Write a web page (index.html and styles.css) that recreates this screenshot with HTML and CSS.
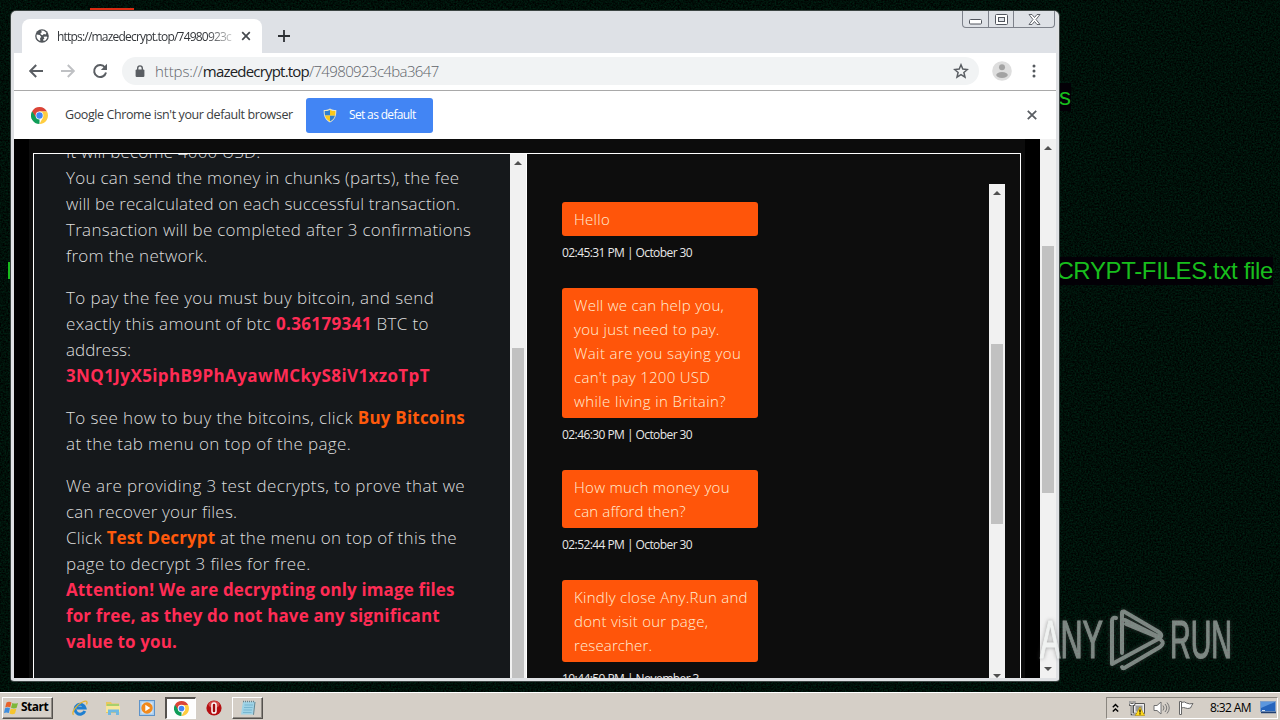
FILE: index.html
```html
<!DOCTYPE html>
<html lang="en">
<head>
    <meta charset="UTF-8">
    <title>mazedecrypt.top</title>
    <link rel="stylesheet" href="styles.css">
</head>
<body>
    <div class="desktop">
        <svg class="noise" width="1280" height="693">
            <filter id="grain" x="0" y="0" width="100%" height="100%" color-interpolation-filters="sRGB">
                <feTurbulence type="fractalNoise" baseFrequency="0.6" numOctaves="2" seed="4"/>
                <feColorMatrix values="0 0 0 0 0  0 0.22 0 0 -0.047  0 0.13 0 0 -0.03  0 0 0 0 1"/>
            </filter>
            <rect width="1280" height="693" filter="url(#grain)"/>
        </svg>
        <div class="desk-icon"></div>
        <div class="wall-text wall-s">s</div>
        <div class="wall-text wall-left"></div>
        <div class="wall-text wall-file">CRYPT-FILES.txt file</div>

        <div class="window">
            <div class="tab-strip">
                <div class="tab">
                    <svg class="globe" width="14" height="14" viewBox="0 0 14 14"><circle cx="7" cy="7" r="6.8" fill="#50555a"/><path d="M1.7 5.4l3 .7 1.6 1.8-1.2 1.2.2 2.8C2.500 11 1 8 1.700 5.400zM6 1.500l2.800.200 2.600 2-.6 1.700-2-.4-1.300 1.200-1.700-.6-.3-1.600 1.500-.7zM8.500 7.700l3.200-.3.7 1-1.700 2.900-2.100.8-.5-1.500 1.300-1z" fill="#fff"/></svg>
                    <span class="tab-title">https://mazedecrypt.top/74980923c</span>
                    <svg class="tab-close" width="10" height="10" viewBox="0 0 10 10"><path d="M1.200 1.200l7.600 7.600M8.800 1.200l-7.600 7.600" stroke="#45494e" stroke-width="1.700"/></svg>
                </div>
                <svg class="new-tab" width="12" height="12" viewBox="0 0 12 12"><path d="M6 0v12M0 6h12" stroke="#2c2f33" stroke-width="1.800"/></svg>
                <div class="win-buttons">
                    <span class="wb wb-min"><svg width="13" height="6"><rect x=".5" y=".5" width="12" height="4.500" rx="1" fill="#fff" stroke="#52565e"/></svg></span>
                    <span class="wb wb-max"><svg width="13" height="11"><rect x=".5" y=".5" width="12" height="10" rx="1" fill="#fff" stroke="#52565e"/><rect x="3.500" y="3.500" width="6" height="4" fill="#dee1e6" stroke="#52565e"/></svg></span>
                    <span class="wb wb-close"><svg width="13" height="11" viewBox="0 0 13 11"><path d="M1 .5h3l2.500 3 2.500-3h3l-4 5 4 5H9l-2.500-3-2.500 3H1l4-5z" fill="#fff" stroke="#52565e" stroke-width=".9"/></svg></span>
                </div>
            </div>

            <div class="toolbar">
                <svg class="nav" width="16" height="16" viewBox="0 0 16 16"><path d="M15 8H2.500M8.200 2L2.200 8l6 6" fill="none" stroke="#5a5e63" stroke-width="2"/></svg>
                <svg class="nav" width="16" height="16" viewBox="0 0 16 16"><path d="M1 8h12.500M7.800 2l6 6-6 6" fill="none" stroke="#bfc1c4" stroke-width="2"/></svg>
                <svg class="nav" width="16" height="16" viewBox="0 0 16 16"><path d="M13 4.500A6 6 0 1 0 14 9.500" fill="none" stroke="#5a5e63" stroke-width="2"/><path d="M15 .8v6.200H8.800z" fill="#5a5e63"/></svg>
                <div class="omnibox">
                    <svg width="10" height="13" viewBox="0 0 10 13"><path d="M2.700 5V3.200a2.300 2.300 0 0 1 4.600 0V5" fill="none" stroke="#5a5e63" stroke-width="1.400"/><rect x=".6" y="4.600" width="8.800" height="7.400" rx="1" fill="#5a5e63"/></svg>
                    <span class="url"><i>https://</i><b>mazedecrypt.top</b>/74980923c4ba3647</span>
                    <svg class="star" width="16" height="16" viewBox="0 0 16 16"><path d="M8 1.800l1.800 4.300 4.600.4-3.500 3 1.100 4.600L8 11.700l-4 2.400 1.100-4.600-3.500-3 4.600-.4z" fill="none" stroke="#5a5e63" stroke-width="1.500"/></svg>
                </div>
                <svg class="avatar" width="20" height="20" viewBox="0 0 20 20"><circle cx="10" cy="10" r="9.800" fill="#dedede"/><circle cx="10" cy="6.300" r="3" fill="#a3a3a3"/><ellipse cx="10" cy="14" rx="5.800" ry="2.900" fill="#a3a3a3"/></svg>
                <svg class="menu" width="4" height="14" viewBox="0 0 4 14"><g fill="#55595e"><circle cx="2" cy="2" r="1.500"/><circle cx="2" cy="7" r="1.500"/><circle cx="2" cy="12" r="1.500"/></g></svg>
            </div>

            <div class="infobar">
                <svg width="17" height="17" viewBox="0 0 48 48"><path d="M24 24v24A24 24 0 0 1 3.200 12z" fill="#0f9d58"/><path d="M24 13h21.300A24 24 0 0 0 3.200 12L14.500 29.500z" fill="#db4437"/><path d="M33.500 29.500L24 48A24 24 0 0 0 45.300 13H24z" fill="#ffcd40"/><circle cx="24" cy="24" r="11" fill="#fff"/><circle cx="24" cy="24" r="9" fill="#4285f4"/></svg>
                <span class="info-text">Google Chrome isn't your default browser</span>
                <button class="default-btn">
                    <svg width="14" height="15" viewBox="0 0 14 15"><path d="M7 .5c2 1.300 4 1.500 6.300 1.500C13.500 8 12 12 7 14.500 2 12 .5 8 .7 2 3 2 5 1.800 7 .5z" fill="#e9e4c5"/><path d="M7 1.900V7.500H2C1.700 6 1.700 4.500 1.700 3 3.800 3 5.300 2.800 7 1.900zM7 7.500h5C11.200 10.300 9.800 12 7 13.400z" fill="#2f7fd0"/><path d="M7 1.900C8.700 2.800 10.200 3 12.300 3c0 1.500 0 3-.3 4.500H7zM2 7.500h5v5.900C4.200 12 2.800 10.300 2 7.500z" fill="#fbc91b"/></svg>
                    <span>Set as default</span>
                </button>
                <svg class="info-close" width="10" height="10" viewBox="0 0 10 10"><path d="M.8.8l8.400 8.400M9.200.8L.8 9.200" stroke="#5a5e63" stroke-width="1.800"/></svg>
            </div>

            <div class="page">
                <div class="content">
                    <div class="box">
                        <div class="instructions">
                            <p>
                                <span class="sp-s">It will become 4000 USD.</span><br>
                                <span class="sp-m">You can send the money in chunks (parts), the fee</span><br>
                                <span class="sp-xs">will be recalculated on each successful transaction.</span><br>
                                <span class="sp-m">Transaction will be completed after 3 confirmations</span><br>
                                <span class="sp-m">from the network.</span>
                            </p>
                            <p>
                                <span class="sp-xl">To pay the fee you must buy bitcoin, and send</span><br>
                                <span class="sp-l">exactly this amount of btc <b class="red">0.36179341</b> BTC to</span><br>
                                <span>address:</span><br>
                                <b class="red sp-xl">3NQ1JyX5iphB9PhAyawMCkyS8iV1xzoTpT</b>
                            </p>
                            <p>
                                <span class="sp-xl">To see how to buy the bitcoins, click <b class="orange sp-s">Buy Bitcoins</b></span><br>
                                <span class="sp-xl">at the tab menu on top of the page.</span>
                            </p>
                            <p>
                                <span class="sp-xl">We are providing 3 test decrypts, to prove that we</span><br>
                                <span class="sp-s">can recover your files.</span><br>
                                <span class="sp-m">Click <b class="orange sp-xs">Test Decrypt</b> at the menu on top of this the</span><br>
                                <span class="sp-l">page to decrypt 3 files for free.</span><br>
                                <b class="red sp-xs">Attention! We are decrypting only image files</b><br>
                                <b class="red sp-xs">for free, as they do not have any significant</b><br>
                                <b class="red sp-xs">value to you.</b>
                            </p>
                        </div>
                        <div class="scrollbar side-scroll"><i class="up"></i><div class="thumb"></div></div>
                        <div class="chat">
                            <div class="messages">
                                <div class="msg">Hello</div>
                                <div class="time">02:45:31 PM | October 30</div>
                                <div class="msg">Well we can help you,<br>you just need to pay.<br><span class="sp-xl">Wait are you saying you</span><br>can't pay 1200 USD<br><span class="sp-xl">while living in Britain?</span></div>
                                <div class="time">02:46:30 PM | October 30</div>
                                <div class="msg">How much money you<br><span class="sp-xs">can afford then?</span></div>
                                <div class="time">02:52:44 PM | October 30</div>
                                <div class="msg">Kindly close Any.Run and<br>dont visit our page,<br><span class="sp-xs">researcher.</span></div>
                                <div class="time">10:44:50 PM | November 3</div>
                            </div>
                            <div class="scrollbar chat-scroll"><i class="up"></i><div class="thumb"></div><i class="down"></i></div>
                        </div>
                    </div>
                </div>
                <div class="scrollbar page-scroll"><i class="up"></i><div class="thumb"></div><i class="down"></i></div>
            </div>
        </div>

        <svg class="watermark" width="200" height="66" viewBox="0 0 200 66">
            <text x="5" y="51" textLength="63" lengthAdjust="spacingAndGlyphs">ANY</text>
            <text x="135" y="51" textLength="62" lengthAdjust="spacingAndGlyphs">RUN</text>
            <g fill="none" stroke-width="4" stroke-linecap="round" stroke-linejoin="round">
                <path d="M87 46V6q0-2 2-1.500l34 20q4 2.500 3 5l-2 .5L90 13"/>
                <path d="M81 11q-4-1-4 3v43l48-26L91 17"/>
                <path d="M87 60q1 2.500 4 0l34-20q5-4 1-7"/>
            </g>
        </svg>
    </div>

    <div class="taskbar">
        <div class="start">
            <svg width="15" height="14" viewBox="0 0 15 14"><path d="M2.500 1.500Q5 .2 7.500 1.500L6.200 6.400Q3.800 5.200 1.200 6.400z" fill="#e8622a"/><path d="M8.300 1.900Q11 3.200 14 1.900L12.700 6.800Q10 8 7 6.800z" fill="#7db73a"/><path d="M1 7.200Q3.500 6 6 7.200L4.800 12Q2.300 10.800 0 12z" fill="#3f8ede"/><path d="M6.800 7.600Q9.500 9 12.400 7.600L11 12.500Q8.500 13.800 5.500 12.500z" fill="#f6c52c"/></svg>
            <span>Start</span>
        </div>
        <div class="task">
            <svg width="16" height="16" viewBox="0 0 16 16"><path d="M12.800 11A5 5 0 1 1 13 8H5" fill="none" stroke="#1f7fd0" stroke-width="3"/><path d="M1.500 14.800C-1 12 5 4.500 10.500 2 14 .3 16 1 14.500 4.500" fill="none" stroke="#e4b32f" stroke-width="1.300"/></svg>
        </div>
        <div class="task">
            <svg width="16" height="16" viewBox="0 0 16 16"><path d="M1 2h5l1 1.500h7V13H1z" fill="#e8c95d"/><path d="M2 4h12v3H2z" fill="#a8cf6c"/><path d="M1 6h14v6H1z" fill="#f8e69a"/><path d="M3 15V9.500h11V15h-3v-2.500H6V15z" fill="#6fb9e2"/></svg>
        </div>
        <div class="task">
            <svg width="16" height="16" viewBox="0 0 16 16"><rect x=".5" y=".5" width="15" height="15" fill="#a9cdee" stroke="#5d93c9"/><rect x="2.500" y="2.500" width="11" height="11" fill="#d7e9f8"/><circle cx="8" cy="8" r="5.700" fill="#f28a1c"/><path d="M6.300 4.800l5 3.200-5 3.200z" fill="#fff"/></svg>
        </div>
        <div class="task pressed">
            <svg width="15" height="15" viewBox="0 0 48 48"><path d="M24 24v24A24 24 0 0 1 3.200 12z" fill="#0f9d58"/><path d="M24 13h21.300A24 24 0 0 0 3.200 12L14.500 29.500z" fill="#db4437"/><path d="M33.500 29.500L24 48A24 24 0 0 0 45.300 13H24z" fill="#ffcd40"/><circle cx="24" cy="24" r="12" fill="#fff"/><circle cx="24" cy="24" r="9" fill="#4285f4"/></svg>
        </div>
        <div class="task">
            <svg width="16" height="16" viewBox="0 0 16 16"><circle cx="8" cy="8" r="7.600" fill="#b50f12"/><ellipse cx="8" cy="4.500" rx="5.500" ry="3.500" fill="#d44a48"/><rect x="6" y="3" width="4" height="10" rx="1.800" fill="#a10c0e" stroke="#fff" stroke-width="1.500"/></svg>
        </div>
        <div class="task raised">
            <svg width="16" height="16" viewBox="0 0 16 16"><path d="M3 1.500h12l-2 13H1z" fill="#9fd3e6"/><path d="M4.500 5h8.500M4 7.500h8.500M3.500 10H12M3 12.500h8.500" stroke="#69abc6" stroke-width=".7"/><path d="M3 1.500h12" stroke="#6c8089" stroke-width="1.500" stroke-dasharray="1 1"/><path d="M15 2l-1.500 12.800" stroke="#5f8796" stroke-width="1"/></svg>
        </div>
        <div class="tray">
            <svg width="7" height="10" viewBox="0 0 7 10"><path d="M.8 4.200l2.700-2.700 2.700 2.700M.8 8.600l2.700-2.700 2.700 2.700" fill="none" stroke="#000" stroke-width="1.400"/></svg>
            <svg class="net" width="16" height="16" viewBox="0 0 16 16"><path d="M4.500 3.500h11v10h-11z" fill="#eee" stroke="#555"/><path d="M6.500 5.500h7v6h-7z" fill="#9a9a9a"/><path d="M1 1v3.500h4V1M3 4.500v9.500h4" fill="none" stroke="#444" stroke-width="2.500"/><path d="M1 1v3.500h4V1M3 4.500v9.500h4" fill="none" stroke="#fff"/><path d="M11 7l4.700 8.500H6.300z" fill="#ffd91c" stroke="#b08a00" stroke-width=".6"/><path d="M11 9.500v3M11 13.300v1.200" stroke="#000" stroke-width="1.200"/></svg>
            <svg class="vol" width="17" height="16" viewBox="0 0 17 16"><path d="M1 5.500h3L8 2v12l-4-3.500H1z" fill="#fff" stroke="#707070"/><path d="M10 5.500q2 2.500 0 5M12 4q3.500 4 0 8M14 2.500q4.500 5.500 0 11" fill="none" stroke="#777" stroke-width="1"/></svg>
            <svg class="flag" width="16" height="16" viewBox="0 0 16 16"><path d="M3.500 2.500q3-1.500 5 .5 3 1.500 6.500.5-1.500 2-2.500 4.500-3 1-5 0-2-1-4 0z" fill="#fff" stroke="#666"/><path d="M1.500 1.500h2v13h-2z" fill="#fff" stroke="#666"/></svg>
            <span class="clock">8:32 AM</span>
            <svg width="16" height="13" viewBox="0 0 16 13"><rect x=".5" y=".5" width="15" height="10" fill="#2665bd" stroke="#7f9fc9"/><path d="M1 1h14L1 7z" fill="#5c97de"/><path d="M1 11.500h15" stroke="#1f3f70" stroke-width="1.500"/><path d="M2 9.500h3" stroke="#cfe2f7"/></svg>
        </div>
    </div>
</body>
</html>
```
FILE: styles.css
```css
* {
    box-sizing: border-box;
}

body {
    margin: 0;
    width: 1280px;
    height: 720px;
    overflow: hidden;
    display: flex;
    flex-direction: column;
    background: #00120b;
    font-family: "Open Sans", "Noto Sans", sans-serif;
}

.desktop {
    position: relative;
    height: 692px;
    overflow: hidden;
}

.noise {
    display: block;
}

/* wallpaper */
.desk-icon {
    position: absolute;
    left: 90px;
    top: 8px;
    width: 44px;
    height: 6px;
    background: #d92b12;
}

.wall-text {
    position: absolute;
    background: #030006;
    color: #18bd1d;
    font: 24px/28px "Liberation Sans", Arial, sans-serif;
    white-space: nowrap;
}

.wall-s {
    left: 1059px;
    top: 83px;
}

.wall-file {
    right: 7px;
    top: 257px;
    letter-spacing: -0.35px;
}

.wall-left {
    left: 8px;
    top: 262px;
    width: 4px;
    height: 17px;
    background: #18bd1d;
}

/* browser window */
.window {
    position: absolute;
    left: 11px;
    top: 11px;
    width: 1048px;
    height: 670px;
    display: flex;
    flex-direction: column;
    border: solid #dfe1e4;
    border-width: 0 3px 3px;
    border-radius: 5px 5px 3px 3px;
    background: #dee1e6;
    overflow: hidden;
    box-shadow: 0 0 0 1px #3c4543;
}

.tab-strip {
    display: flex;
    height: 42px;
    flex: none;
}

.tab {
    display: flex;
    align-items: center;
    width: 240px;
    height: 34px;
    margin: 8px 0 0 8px;
    padding-left: 13px;
    border-radius: 8px 8px 0 0;
    background: #fff;
}

.tab-title {
    width: 177px;
    margin-left: 8px;
    overflow: hidden;
    font-size: 12px;
    letter-spacing: -0.8px;
    white-space: nowrap;
    color: #33363a;
    -webkit-mask-image: linear-gradient(to right, #000 150px, transparent 182px);
}

.tab-close {
    margin-left: 7px;
}

.new-tab {
    margin: 19px 0 0 16px;
}

.win-buttons {
    display: flex;
    height: 17px;
    margin: 0 1px 0 auto;
    border: 1px solid #7d818a;
    border-top: 0;
    border-radius: 0 0 4px 4px;
}

.wb {
    display: flex;
    align-items: center;
    justify-content: center;
    width: 25px;
}

.wb + .wb {
    border-left: 1px solid #7d818a;
}

.wb-min {
    padding-top: 5px;
}

.wb-close {
    width: 41px;
}

.toolbar {
    display: flex;
    align-items: center;
    height: 37px;
    flex: none;
    padding: 0 20px 1px 14px;
    background: #fff;
}

.nav {
    margin-right: 16px;
}

.omnibox {
    display: flex;
    align-items: center;
    width: 857px;
    height: 28px;
    margin-left: -2px;
    padding: 0 10px 0 13px;
    border-radius: 14px;
    background: #f1f3f4;
}

.url {
    margin-left: 10px;
    font-size: 15px;
    font-weight: 300;
    letter-spacing: -0.63px;
    color: #60646a;
}

.url i {
    font-style: normal;
    letter-spacing: -0.1px;
}

.url b {
    font-weight: 400;
    letter-spacing: -0.8px;
    color: #202124;
}

.star {
    margin-left: auto;
}

.avatar {
    margin-left: 13px;
}

.menu {
    margin-left: 20px;
}

.infobar {
    display: flex;
    align-items: center;
    height: 49px;
    flex: none;
    padding: 0 19px 0 17px;
    border-top: 1px solid #a9a9a9;
    background: #fff;
}

.info-text {
    width: 228px;
    margin: -2px 13px 0 17px;
    font-size: 12.5px;
    letter-spacing: -0.4px;
    white-space: nowrap;
    color: #3a3d41;
}

.default-btn {
    display: flex;
    align-items: center;
    width: 127px;
    height: 35px;
    padding: 0 0 0 17px;
    gap: 12px;
    border: 0;
    border-radius: 3px;
    background: #4285f4;
    color: #fff;
    font: 12px "Open Sans", sans-serif;
    letter-spacing: -0.65px;
    white-space: nowrap;
}

.default-btn span {
    margin-top: -2px;
}

.info-close {
    margin-left: auto;
}

/* page */
.page {
    display: flex;
    flex: 1;
    min-height: 0;
    background: #000;
}

.content {
    width: 996px;
    margin: 0 15px;
    padding: 14px 4px 0;
    background: #0c0c0c;
    overflow: hidden;
}

.box {
    display: flex;
    width: 988px;
    height: 560px;
    border: 1px solid #fff;
    background: #0d0d0d;
    overflow: hidden;
}

.instructions {
    width: 476px;
    padding-left: 32px;
    background: #15181b;
    color: #dedede;
    font-size: 17px;
    font-weight: 300;
    line-height: 26px;
    white-space: nowrap;
}

.instructions p {
    margin: 0 0 16px;
}

.instructions p:first-child {
    margin-top: -15px;
}

.red,
.orange {
    font-weight: 700;
}

.red {
    color: #ff2c55;
}

.orange {
    color: #ff5a0c;
}

/* letter spacing steps */
.sp-xs {
    letter-spacing: 0.13px;
}

.sp-s {
    letter-spacing: 0.2px;
}

.sp-m {
    letter-spacing: 0.28px;
}

.sp-l {
    letter-spacing: 0.35px;
}

.sp-xl {
    letter-spacing: 0.39px;
}

.scrollbar {
    display: flex;
    flex-direction: column;
    align-items: center;
    width: 16px;
    background: #f1f1f1;
}

.up,
.down {
    border: 4px solid transparent;
    border-top: 0;
    border-bottom: 4px solid #505050;
}

.down {
    transform: rotate(180deg);
    margin: auto 0 7px;
}

.thumb {
    width: 12px;
    background: #c1c1c1;
}

.side-scroll {
    flex: none;
    width: 17px;
    border-right: 1px solid #fff;
}

.side-scroll .up {
    margin-top: 7px;
}

.side-scroll .thumb {
    height: 400px;
    margin-top: 183px;
}

.chat {
    display: flex;
    justify-content: space-between;
    width: 478px;
    height: 525px;
    padding: 30px 0 0 35px;
}

.messages {
    width: 196px;
    padding-top: 18px;
}

.msg {
    padding: 5px 12px;
    border-radius: 3px;
    background: #ff550a;
    color: #ffefd6;
    font-size: 15px;
    font-weight: 300;
    line-height: 24px;
    letter-spacing: 0.28px;
    white-space: nowrap;
}

.time {
    margin: 8px 0 26px;
    color: #e8e8e8;
    font-size: 12px;
    line-height: 18px;
    letter-spacing: -0.57px;
    white-space: nowrap;
}

.chat-scroll .up {
    margin-top: 7px;
}

.chat-scroll .thumb {
    height: 180px;
    margin-top: 149px;
}

.chat-scroll .down {
    margin-bottom: 1px;
}

.page-scroll .up {
    margin-top: 7px;
}

.page-scroll .thumb {
    height: 247px;
    margin-top: 96px;
}

.watermark {
    position: absolute;
    left: 1035px;
    top: 607px;
    opacity: .52;
    filter: drop-shadow(0 0 2px #555);
}

.watermark text {
    font: 53px "Liberation Sans", Arial, sans-serif;
    fill: #f0f4f2;
    stroke: #f0f4f2;
    stroke-width: 1.2px;
}

.watermark g {
    stroke: #f0f4f2;
}

/* taskbar */
.taskbar {
    display: flex;
    align-items: center;
    height: 28px;
    padding: 2px 2px 0 2px;
    border-top: 1px solid #fff;
    background: #d5cfc7;
}

.start,
.raised {
    border: 1px solid #fff;
    border-right-color: #55524e;
    border-bottom-color: #55524e;
    box-shadow: inset -1px -1px #8f8b85;
}

.start {
    display: flex;
    align-items: center;
    gap: 2px;
    width: 51px;
    height: 22px;
    padding-left: 1px;
    margin-right: 11px;
    font-size: 12px;
    font-weight: 700;
    letter-spacing: -0.5px;
    color: #000;
}

.start span {
    margin-top: -2px;
}

.task {
    display: flex;
    align-items: center;
    justify-content: center;
    width: 31px;
    height: 22px;
    margin-right: 2.7px;
}

.pressed {
    border: 1px solid #55524e;
    border-width: 2px 1px 1px 2px;
    border-right-color: #fff;
    border-bottom-color: #fff;
    background: #fdfdfd;
}

.tray {
    display: flex;
    align-items: center;
    width: 172px;
    height: 22px;
    margin-left: auto;
    padding-left: 5px;
    border: 1px solid #8a867f;
    border-right-color: #fff;
    border-bottom-color: #fff;
}

.net {
    margin-left: 10px;
}

.vol,
.flag {
    margin-left: 8px;
}

.clock {
    width: 42px;
    margin: -1px 8px 0 16px;
    font-size: 12px;
    letter-spacing: -0.6px;
    white-space: nowrap;
    color: #000;
}
```
